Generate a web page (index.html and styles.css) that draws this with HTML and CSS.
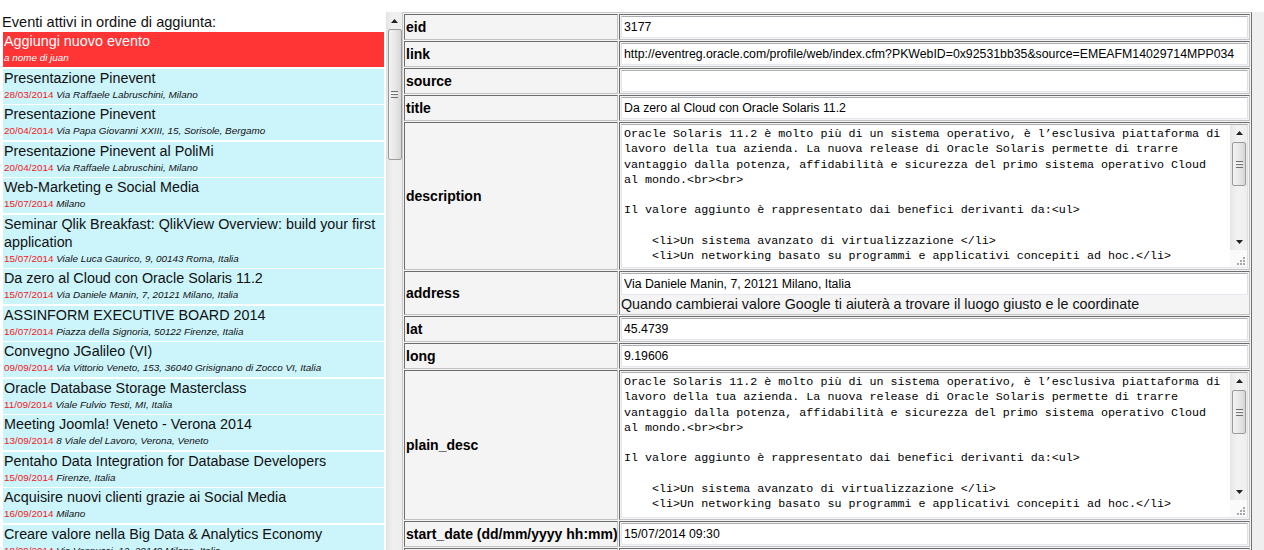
FILE: index.html
```html
<!DOCTYPE html>
<html lang="it">
<head>
<meta charset="utf-8">
<title>Eventi</title>
<link rel="stylesheet" href="styles.css">
</head>
<body>
<div class="page">
  <aside class="sidebar">
    <div class="list">
      <div class="list-title">Eventi attivi in ordine di aggiunta:</div>
      <div class="item new">
        <div class="item-title">Aggiungi nuovo evento</div>
        <div class="item-sub"><em>a nome di juan</em></div>
      </div>
      <div class="item">
        <div class="item-title">Presentazione Pinevent</div>
        <div class="item-sub"><span class="date">28/03/2014</span> <em>Via Raffaele Labruschini, Milano</em></div>
      </div>
      <div class="item">
        <div class="item-title">Presentazione Pinevent</div>
        <div class="item-sub"><span class="date">20/04/2014</span> <em>Via Papa Giovanni XXIII, 15, Sorisole, Bergamo</em></div>
      </div>
      <div class="item">
        <div class="item-title">Presentazione Pinevent al PoliMi</div>
        <div class="item-sub"><span class="date">20/04/2014</span> <em>Via Raffaele Labruschini, Milano</em></div>
      </div>
      <div class="item">
        <div class="item-title">Web-Marketing e Social Media</div>
        <div class="item-sub"><span class="date">15/07/2014</span> <em>Milano</em></div>
      </div>
      <div class="item">
        <div class="item-title">Seminar Qlik Breakfast: QlikView Overview: build your first<br>application</div>
        <div class="item-sub"><span class="date">15/07/2014</span> <em>Viale Luca Gaurico, 9, 00143 Roma, Italia</em></div>
      </div>
      <div class="item">
        <div class="item-title">Da zero al Cloud con Oracle Solaris 11.2</div>
        <div class="item-sub"><span class="date">15/07/2014</span> <em>Via Daniele Manin, 7, 20121 Milano, Italia</em></div>
      </div>
      <div class="item">
        <div class="item-title">ASSINFORM EXECUTIVE BOARD 2014</div>
        <div class="item-sub"><span class="date">16/07/2014</span> <em>Piazza della Signoria, 50122 Firenze, Italia</em></div>
      </div>
      <div class="item">
        <div class="item-title">Convegno JGalileo (VI)</div>
        <div class="item-sub"><span class="date">09/09/2014</span> <em>Via Vittorio Veneto, 153, 36040 Grisignano di Zocco VI, Italia</em></div>
      </div>
      <div class="item">
        <div class="item-title">Oracle Database Storage Masterclass</div>
        <div class="item-sub"><span class="date">11/09/2014</span> <em>Viale Fulvio Testi, MI, Italia</em></div>
      </div>
      <div class="item">
        <div class="item-title">Meeting Joomla! Veneto - Verona 2014</div>
        <div class="item-sub"><span class="date">13/09/2014</span> <em>8 Viale del Lavoro, Verona, Veneto</em></div>
      </div>
      <div class="item">
        <div class="item-title">Pentaho Data Integration for Database Developers</div>
        <div class="item-sub"><span class="date">15/09/2014</span> <em>Firenze, Italia</em></div>
      </div>
      <div class="item">
        <div class="item-title">Acquisire nuovi clienti grazie ai Social Media</div>
        <div class="item-sub"><span class="date">16/09/2014</span> <em>Milano</em></div>
      </div>
      <div class="item">
        <div class="item-title">Creare valore nella Big Data &amp; Analytics Economy</div>
        <div class="item-sub"><span class="date">18/09/2014</span> <em>Via Vespucci, 12, 20149 Milano, Italia</em></div>
      </div>
    </div>
    <div class="vscroll">
      <div class="sb-arrow"><svg width="7" height="4" viewBox="0 0 7 4"><path d="M0 4 L3.5 0 L7 4 Z" fill="#222"/></svg></div>
      <div class="sb-thumb big"><span class="grip"></span></div>
    </div>
  </aside>

  <main class="content">
    <table class="form">
      <colgroup><col class="c-label"><col class="c-value"></colgroup>
      <tr><td class="label">eid</td><td class="value"><div class="field">3177</div></td></tr>
      <tr><td class="label">link</td><td class="value"><div class="field">http://eventreg.oracle.com/profile/web/index.cfm?PKWebID=0x92531bb35&amp;source=EMEAFM14029714MPP034</div></td></tr>
      <tr><td class="label">source</td><td class="value"><div class="field"></div></td></tr>
      <tr><td class="label">title</td><td class="value"><div class="field">Da zero al Cloud con Oracle Solaris 11.2</div></td></tr>
      <tr><td class="label">description</td><td class="value">
        <div class="ta">
          <div class="ta-text">Oracle Solaris 11.2 è molto più di un sistema operativo, è l’esclusiva piattaforma di
lavoro della tua azienda. La nuova release di Oracle Solaris permette di trarre
vantaggio dalla potenza, affidabilità e sicurezza del primo sistema operativo Cloud
al mondo.&lt;br&gt;&lt;br&gt;

Il valore aggiunto è rappresentato dai benefici derivanti da:&lt;ul&gt;

    &lt;li&gt;Un sistema avanzato di virtualizzazione &lt;/li&gt;
    &lt;li&gt;Un networking basato su programmi e applicativi concepiti ad hoc.&lt;/li&gt;</div>
          <div class="ta-side">
            <div class="ta-scroll">
              <div class="sb-arrow small"><svg width="7" height="4" viewBox="0 0 7 4"><path d="M0 4 L3.5 0 L7 4 Z" fill="#222"/></svg></div>
              <div class="sb-thumb"><span class="grip"></span></div>
              <div class="sb-fill"></div>
              <div class="sb-arrow small"><svg width="7" height="4" viewBox="0 0 7 4"><path d="M0 0 L3.5 4 L7 0 Z" fill="#222"/></svg></div>
            </div>
            <div class="ta-grip"><svg width="9" height="9" viewBox="0 0 9 9"><g fill="#a8a8a8"><rect x="7" y="1" width="2" height="2"/><rect x="4" y="4" width="2" height="2"/><rect x="7" y="4" width="2" height="2"/><rect x="1" y="7" width="2" height="2"/><rect x="4" y="7" width="2" height="2"/><rect x="7" y="7" width="2" height="2"/></g></svg></div>
          </div>
        </div>
      </td></tr>
      <tr><td class="label">address</td><td class="value">
        <div class="field">Via Daniele Manin, 7, 20121 Milano, Italia</div>
        <div class="hint">Quando cambierai valore Google ti aiuterà a trovare il luogo giusto e le coordinate</div>
      </td></tr>
      <tr><td class="label">lat</td><td class="value"><div class="field">45.4739</div></td></tr>
      <tr><td class="label">long</td><td class="value"><div class="field">9.19606</div></td></tr>
      <tr><td class="label">plain_desc</td><td class="value">
        <div class="ta tall">
          <div class="ta-text">Oracle Solaris 11.2 è molto più di un sistema operativo, è l’esclusiva piattaforma di
lavoro della tua azienda. La nuova release di Oracle Solaris permette di trarre
vantaggio dalla potenza, affidabilità e sicurezza del primo sistema operativo Cloud
al mondo.&lt;br&gt;&lt;br&gt;

Il valore aggiunto è rappresentato dai benefici derivanti da:&lt;ul&gt;

    &lt;li&gt;Un sistema avanzato di virtualizzazione &lt;/li&gt;
    &lt;li&gt;Un networking basato su programmi e applicativi concepiti ad hoc.&lt;/li&gt;</div>
          <div class="ta-side">
            <div class="ta-scroll">
              <div class="sb-arrow small"><svg width="7" height="4" viewBox="0 0 7 4"><path d="M0 4 L3.5 0 L7 4 Z" fill="#222"/></svg></div>
              <div class="sb-thumb"><span class="grip"></span></div>
              <div class="sb-fill"></div>
              <div class="sb-arrow small"><svg width="7" height="4" viewBox="0 0 7 4"><path d="M0 0 L3.5 4 L7 0 Z" fill="#222"/></svg></div>
            </div>
            <div class="ta-grip"><svg width="9" height="9" viewBox="0 0 9 9"><g fill="#a8a8a8"><rect x="7" y="1" width="2" height="2"/><rect x="4" y="4" width="2" height="2"/><rect x="7" y="4" width="2" height="2"/><rect x="1" y="7" width="2" height="2"/><rect x="4" y="7" width="2" height="2"/><rect x="7" y="7" width="2" height="2"/></g></svg></div>
          </div>
        </div>
      </td></tr>
      <tr><td class="label">start_date (dd/mm/yyyy hh:mm)</td><td class="value"><div class="field">15/07/2014 09:30</div></td></tr>
      <tr><td class="label">end_date (dd/mm/yyyy hh:mm)</td><td class="value"><div class="field">15/07/2014 13:00</div></td></tr>
    </table>
  </main>
  <div class="edge"></div>
</div>
</body>
</html>
```

FILE: styles.css
```css
html, body {
  margin: 0;
  padding: 0;
  background: #fff;
}

body {
  font-family: "Liberation Sans", Arial, sans-serif;
  color: #111;
}

.page {
  display: flex;
  align-items: flex-start;
  padding-top: 12px;
  height: 550px;
  box-sizing: border-box;
  overflow: hidden;
}

/* ---------- left list ---------- */
.sidebar {
  display: flex;
  flex: none;
  width: 402px;
  height: 538px;
}

.list {
  width: 386px;
  height: 538px;
  overflow: hidden;
}

.list-title {
  font-size: 14.6px;
  line-height: 20px;
  padding-left: 2px;
  color: #111;
  white-space: nowrap;
}

.item {
  margin: 0 2px 1.5px 3px;
  padding: 0 2px 1px 1px;
  background: #ccf4fb;
  color: #111;
}

.item.new {
  background: #ff3434;
  color: #fff;
}

.item-title {
  font-size: 14.35px;
  line-height: 18px;
  white-space: nowrap;
}

.item-sub {
  font-size: 9.9px;
  line-height: 16px;
  white-space: nowrap;
  color: #111;
}

.item.new .item-sub {
  color: #fff;
}

.item-sub em {
  font-style: italic;
}

.date {
  color: #f01a1a;
}

/* fake scrollbars */
.vscroll {
  width: 16px;
  height: 538px;
  display: flex;
  flex-direction: column;
  align-items: center;
  background: linear-gradient(to right, #e6e6e6, #f1f1f1 40%, #ededed);
  border-left: 1px solid #e2e2e2;
  box-sizing: border-box;
}

.sb-arrow {
  height: 17px;
  width: 100%;
  display: flex;
  align-items: center;
  justify-content: center;
  flex: none;
}

.sb-arrow.small {
  height: 16px;
}

.sb-thumb {
  width: 14px;
  height: 44px;
  box-sizing: border-box;
  border: 1px solid #9b9b9b;
  border-radius: 2px;
  background: linear-gradient(to right, #f2f2f2, #e8e8e8 50%, #d6d6d6);
  display: flex;
  align-items: center;
  justify-content: center;
  flex: none;
  margin-top: 1px;
}

.sb-thumb.big {
  height: 131px;
  margin-top: 0;
}

.grip {
  width: 7px;
  height: 5px;
  border-top: 1px solid #6f6f6f;
  border-bottom: 1px solid #6f6f6f;
  background: linear-gradient(#fff 0 1px, #6f6f6f 1px 2px, transparent 2px) 0 1px / 100% 3px no-repeat;
}

.sb-fill {
  flex: 1;
}

/* ---------- form table ---------- */
.content {
  flex: none;
}

.form {
  width: 850px;
  table-layout: fixed;
  border-collapse: separate;
  border-spacing: 1px;
  border: 1px solid;
  border-color: #c9c9c9 #707070 #707070 #c9c9c9;
  background: #f3f3f3;
}

.c-label {
  width: 214px;
}

.form td {
  border: 1px solid;
  border-color: #6c6c6c #c2c2c2 #c2c2c2 #6c6c6c;
  padding: 1px;
  background: #f4f4f4;
}

.label {
  font-weight: bold;
  font-size: 14px;
  white-space: nowrap;
  color: #000;
  vertical-align: middle;
  overflow: hidden;
}

.field {
  height: 22px;
  box-sizing: border-box;
  border: 1px solid;
  border-color: #abadb3 #dbdfe6 #e3e9ef #e2e3ea;
  background: #fff;
  font-family: "Liberation Sans", Arial, sans-serif;
  font-size: 12.3px;
  line-height: 21px;
  padding: 0 2px;
  white-space: nowrap;
  overflow: hidden;
  color: #000;
}

.hint {
  font-size: 14.3px;
  line-height: 18px;
  color: #111;
  white-space: nowrap;
}

.ta {
  display: flex;
  height: 144px;
  box-sizing: border-box;
  border: 1px solid;
  border-color: #abadb3 #dbdfe6 #e3e9ef #e2e3ea;
  background: #fff;
}

.ta.tall {
  height: 146px;
}

.ta-text {
  flex: 1;
  padding: 2px 2px;
  font-family: "Liberation Mono", "Courier New", monospace;
  font-size: 11.7px;
  line-height: 15.25px;
  white-space: pre;
  overflow: hidden;
  color: #000;
}

.ta-side {
  width: 17px;
  display: flex;
  flex-direction: column;
  flex: none;
}

.ta-scroll {
  flex: 1;
  display: flex;
  flex-direction: column;
  align-items: center;
  background: linear-gradient(to right, #e8e8e8, #f2f2f2 40%, #eeeeee);
  border-left: 1px solid #e6e6e6;
}

.ta-grip {
  height: 17px;
  display: flex;
  align-items: flex-end;
  justify-content: flex-end;
  padding: 0 2px 2px 0;
  box-sizing: border-box;
  background: #fafafa;
}

.edge {
  flex: 1;
  align-self: stretch;
  background: #efefef;
}
```
